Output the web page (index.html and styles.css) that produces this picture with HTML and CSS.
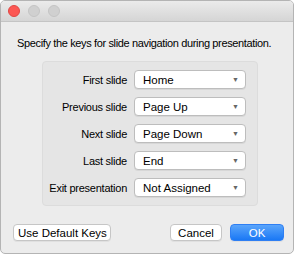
FILE: index.html
```html
<!DOCTYPE html>
<html>
<head>
<meta charset="utf-8">
<link rel="stylesheet" href="styles.css">
</head>
<body>
<div class="window">
  <div class="titlebar">
    <span class="light red"></span>
    <span class="light"></span>
    <span class="light"></span>
  </div>
  <div class="content">
    <p class="intro">Specify the keys for slide navigation during presentation.</p>
    <div class="group">
      <div class="row"><span class="label">First slide</span><div class="popup"><span>Home</span><span class="arrow">▼</span></div></div>
      <div class="row"><span class="label">Previous slide</span><div class="popup"><span>Page Up</span><span class="arrow">▼</span></div></div>
      <div class="row"><span class="label">Next slide</span><div class="popup"><span>Page Down</span><span class="arrow">▼</span></div></div>
      <div class="row"><span class="label">Last slide</span><div class="popup"><span>End</span><span class="arrow">▼</span></div></div>
      <div class="row"><span class="label">Exit presentation</span><div class="popup"><span>Not Assigned</span><span class="arrow">▼</span></div></div>
    </div>
    <div class="buttons">
      <button class="btn first">Use Default Keys</button>
      <div class="spacer"></div>
      <button class="btn cancel">Cancel</button>
      <button class="btn ok">OK</button>
    </div>
  </div>
</div>
</body>
</html>
```
FILE: styles.css
```css
html, body {
  margin: 0;
  padding: 0;
  background: #ffffff;
  font-family: "Liberation Sans", Arial, sans-serif;
}
.window {
  box-sizing: border-box;
  width: 294px;
  height: 254px;
  border: 1px solid #b4b4b4;
  border-radius: 5px;
  overflow: hidden;
  background: #ececec;
  display: flex;
  flex-direction: column;
}
.titlebar {
  box-sizing: border-box;
  height: 21px;
  flex: none;
  background: linear-gradient(#ebebeb, #d5d5d5);
  border-bottom: 1px solid #c4c4c4;
  display: flex;
  align-items: center;
  padding-left: 7px;
  gap: 8px;
}
.light {
  width: 12px;
  height: 12px;
  border-radius: 50%;
  box-sizing: border-box;
  background: #d0d0d0;
  border: 1px solid #c4c4c4;
}
.light.red {
  background: #fc5753;
  border-color: #df4744;
}
.content {
  flex: 1;
  display: flex;
  flex-direction: column;
  padding: 0 8px 0 11px;
}
.intro {
  margin: 15px 0 0 5px;
  font-size: 11px;
  letter-spacing: -0.36px;
  color: #000;
  white-space: nowrap;
}
.group {
  margin: 12px 0 0 30px;
  width: 216px;
  box-sizing: border-box;
  background: #e5e5e5;
  border: 1px solid #dcdcdc;
  border-radius: 4px;
  padding: 8px 0 8px;
  display: flex;
  flex-direction: column;
  gap: 8px;
}
.row {
  display: flex;
  align-items: center;
  height: 19px;
}
.label {
  width: 84px;
  text-align: right;
  font-size: 11px;
  letter-spacing: -0.25px;
  color: #000;
  white-space: nowrap;
}
.popup {
  margin-left: 7px;
  box-sizing: border-box;
  width: 112px;
  height: 19px;
  background: #fff;
  border: 1px solid #bdbdbd;
  border-radius: 4px;
  box-shadow: 0 1px 0 rgba(0,0,0,0.06);
  display: flex;
  align-items: center;
  justify-content: space-between;
  padding: 0 6px 0 8px;
  font-size: 11.5px;
  color: #000;
}
.arrow {
  font-size: 7px;
  color: #666;
}
.buttons {
  margin-top: 18px;
  display: flex;
  align-items: center;
  gap: 7px;
}
.spacer { flex: 1; }
.btn {
  box-sizing: border-box;
  height: 17px;
  font-family: "Liberation Sans", Arial, sans-serif;
  font-size: 11.5px;
  color: #000;
  background: #fff;
  border: 1px solid #c6c6c6;
  border-radius: 4px;
  padding: 0 4px;
  white-space: nowrap;
  box-shadow: 0 1px 0 rgba(0,0,0,0.05);
}
.btn.first {
  margin-left: 1px;
  width: 98px;
}
.cancel { width: 52px; margin-right: 1px; }
.ok {
  width: 54px;
  margin-right: 1px;
  color: #fff;
  border-color: #2f7ff3;
  background: linear-gradient(#5aa5fb, #1a78f5);
}
```
